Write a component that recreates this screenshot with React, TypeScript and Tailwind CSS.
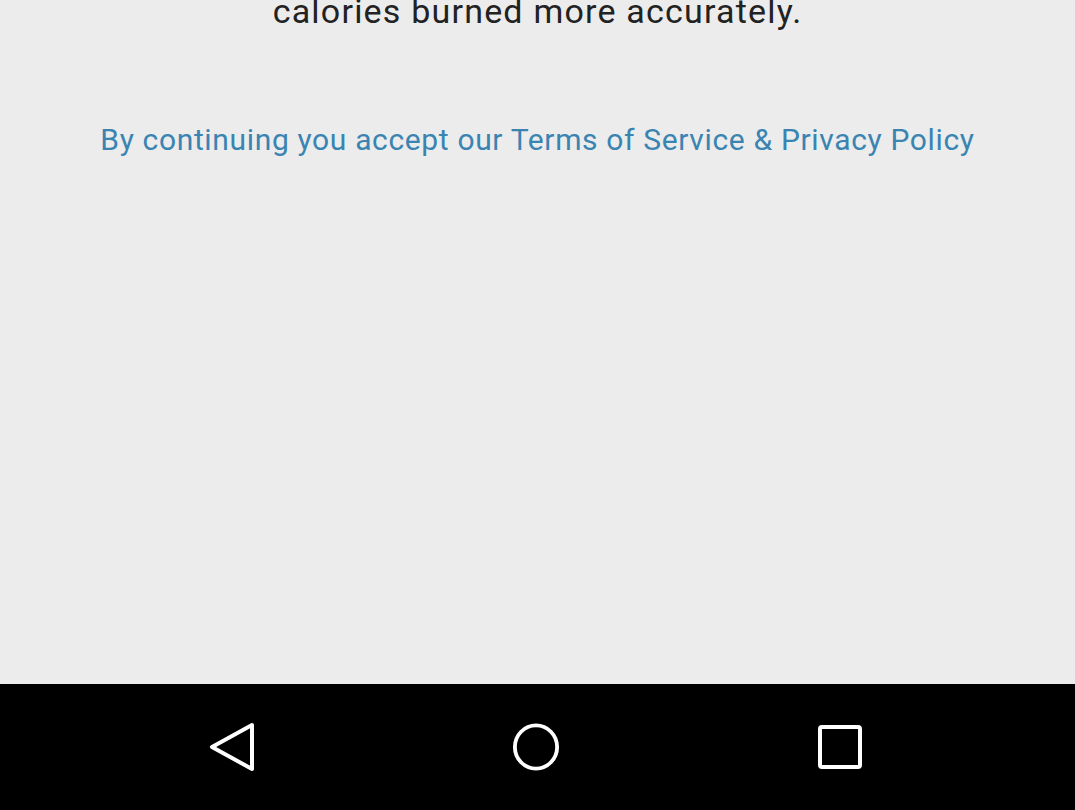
export default function App() {
  return (
    <div
      className="flex h-[810px] w-full flex-col overflow-hidden bg-[#ececec]"
      style={{ fontFamily: 'Roboto, "Noto Sans", sans-serif' }}
    >
      <div className="flex flex-1 flex-col items-center">
        {/* Intro text, scrolled so its last line sits at the top */}
        <p className="mt-[-9px] text-center text-[34px] leading-[40px] tracking-[1.2px] text-[#222222]">
          calories burned more accurately.
        </p>

        <p className="mt-[91px] text-center text-[30px] leading-[36px] tracking-[0.65px] text-[#3a84b2]">
          By continuing you accept our Terms of Service &amp; Privacy Policy
        </p>
      </div>

      {/* Android navigation bar */}
      <div className="flex h-[126px] items-center gap-[256px] bg-black pl-[208px]">
        <button className="flex h-12 w-12 items-center justify-center">
          <svg width="48" height="50" viewBox="0 0 48 50" fill="none">
            <path
              d="M44 3 L4 25 L44 47 Z"
              stroke="white"
              strokeWidth="4"
              strokeLinejoin="round"
            />
          </svg>
        </button>
        <button className="flex h-12 w-12 items-center justify-center">
          <svg width="50" height="50" viewBox="0 0 50 50" fill="none">
            <ellipse cx="25" cy="25" rx="22" ry="22.5" stroke="white" strokeWidth="4" />
          </svg>
        </button>
        <button className="flex h-12 w-12 items-center justify-center">
          <svg width="46" height="44" viewBox="0 0 46 44" fill="none">
            <rect x="3" y="2" width="40" height="40" rx="2" stroke="white" strokeWidth="4" />
          </svg>
        </button>
      </div>
    </div>
  )
}
